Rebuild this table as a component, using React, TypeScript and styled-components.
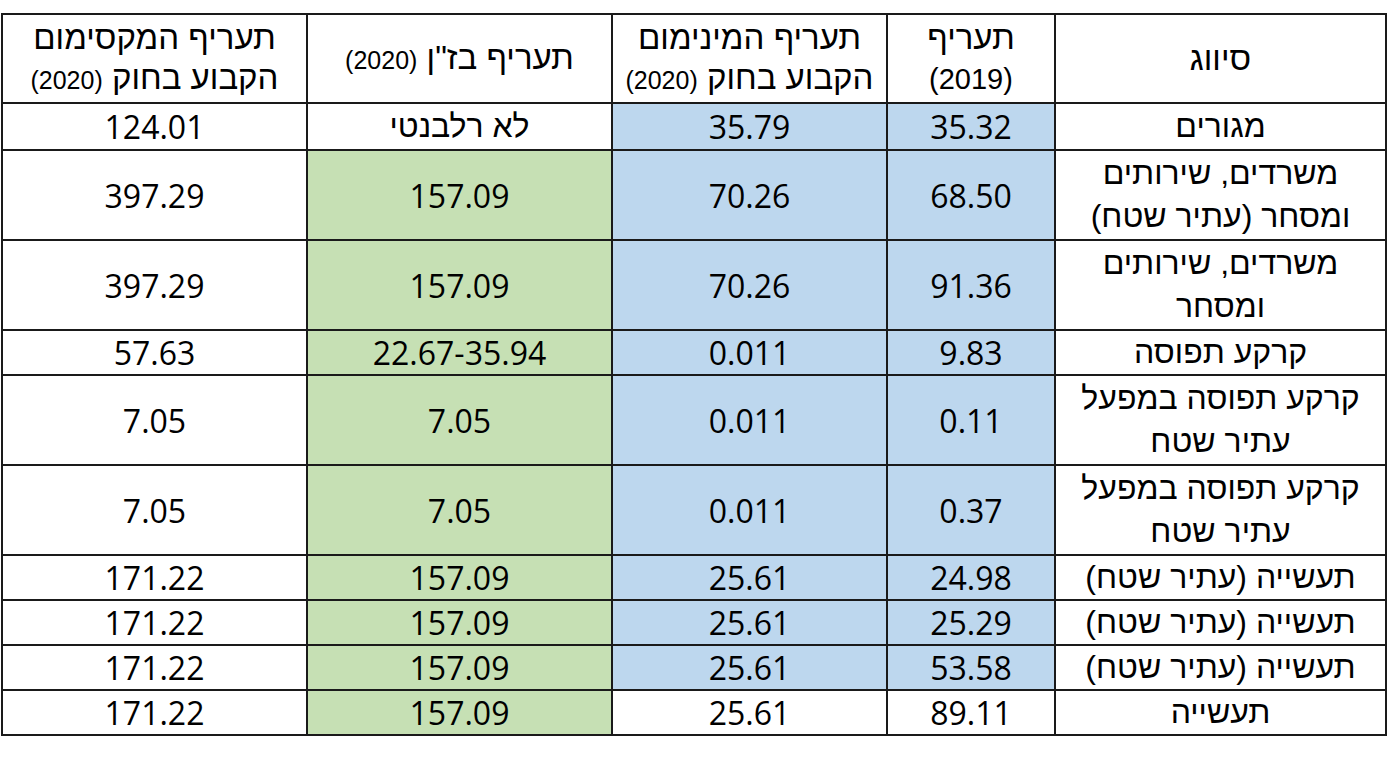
import * as React from 'react';
import styled, { createGlobalStyle } from 'styled-components';

const GlobalStyle = createGlobalStyle`
  html, body {
    margin: 0;
    padding: 0;
    background: #ffffff;
  }
  body {
    font-family: "Liberation Sans", Arial, sans-serif;
    color: #000;
  }
`;

const Page = styled.div`
  width: 1389px;
  height: 757px;
  padding: 13px 0 0 1px;
  box-sizing: border-box;
`;

const Table = styled.table`
  width: 1386px;
  table-layout: fixed;
  border-collapse: collapse;
  direction: rtl;
`;

const HeadRow = styled.tr`
  height: 89px;
`;

const BodyRow = styled.tr<{ h: number }>`
  height: ${({ h }) => h}px;
`;

const HeadCell = styled.th`
  padding: 0 2px;
  border: 2px solid #1a1a1a;
  font-weight: normal;
  font-size: 33px;
  line-height: 40px;
  text-align: center;
  vertical-align: middle;
  white-space: nowrap;
  overflow: hidden;
`;

const Year = styled.span<{ big?: boolean }>`
  font-size: ${({ big }) => (big ? '29px' : '25px')};
`;

type Tint = 'none' | 'blue' | 'green';

const tints: Record<Tint, string> = {
  none: '#ffffff',
  blue: '#bdd7ee',
  green: '#c6e0b4',
};

const Cell = styled.td<{ tint: Tint; num?: boolean }>`
  padding: 0;
  border: 2px solid #1a1a1a;
  background: ${({ tint }) => tints[tint]};
  font-family: ${({ num }) =>
    num ? '"Open Sans", "Liberation Sans", sans-serif' : '"Liberation Sans", Arial, sans-serif'};
  font-size: 32px;
  line-height: 43px;
  text-align: center;
  vertical-align: middle;
  white-space: nowrap;
  overflow: hidden;
`;

interface Row {
  label: React.ReactNode;
  y2019: string;
  min: string;
  bazan: string;
  max: string;
  h: number;
  blue: boolean;
  green: boolean;
}

const rows: Row[] = [
  { label: 'מגורים', y2019: '35.32', min: '35.79', bazan: 'לא רלבנטי', max: '124.01', h: 47, blue: true, green: false },
  { label: <>משרדים, שירותים<br />ומסחר (עתיר שטח)</>, y2019: '68.50', min: '70.26', bazan: '157.09', max: '397.29', h: 90, blue: true, green: true },
  { label: <>משרדים, שירותים<br />ומסחר</>, y2019: '91.36', min: '70.26', bazan: '157.09', max: '397.29', h: 90, blue: true, green: true },
  { label: 'קרקע תפוסה', y2019: '9.83', min: '0.011', bazan: '22.67-35.94', max: '57.63', h: 45, blue: true, green: true },
  { label: <>קרקע תפוסה במפעל<br />עתיר שטח</>, y2019: '0.11', min: '0.011', bazan: '7.05', max: '7.05', h: 90, blue: true, green: true },
  { label: <>קרקע תפוסה במפעל<br />עתיר שטח</>, y2019: '0.37', min: '0.011', bazan: '7.05', max: '7.05', h: 90, blue: true, green: true },
  { label: 'תעשייה (עתיר שטח)', y2019: '24.98', min: '25.61', bazan: '157.09', max: '171.22', h: 45, blue: true, green: true },
  { label: 'תעשייה (עתיר שטח)', y2019: '25.29', min: '25.61', bazan: '157.09', max: '171.22', h: 45, blue: true, green: true },
  { label: 'תעשייה (עתיר שטח)', y2019: '53.58', min: '25.61', bazan: '157.09', max: '171.22', h: 45, blue: true, green: true },
  { label: 'תעשייה', y2019: '89.11', min: '25.61', bazan: '157.09', max: '171.22', h: 45, blue: false, green: true },
];

export default function App() {
  return (
    <Page>
      <GlobalStyle />
      <Table>
        <colgroup>
          <col style={{ width: 331 }} />
          <col style={{ width: 168 }} />
          <col style={{ width: 275 }} />
          <col style={{ width: 305 }} />
          <col style={{ width: 305 }} />
        </colgroup>
        <thead>
          <HeadRow>
            <HeadCell>סיווג</HeadCell>
            <HeadCell>
              תעריף
              <br />
              <Year big>(2019)</Year>
            </HeadCell>
            <HeadCell>
              תעריף המינימום
              <br />
              הקבוע בחוק <Year>(2020)</Year>
            </HeadCell>
            <HeadCell>
              תעריף בז"ן <Year>(2020)</Year>
            </HeadCell>
            <HeadCell>
              תעריף המקסימום
              <br />
              הקבוע בחוק <Year>(2020)</Year>
            </HeadCell>
          </HeadRow>
        </thead>
        <tbody>
          {rows.map((r, i) => (
            <BodyRow key={i} h={r.h}>
              <Cell tint="none">{r.label}</Cell>
              <Cell tint={r.blue ? 'blue' : 'none'} num>{r.y2019}</Cell>
              <Cell tint={r.blue ? 'blue' : 'none'} num>{r.min}</Cell>
              <Cell tint={r.green ? 'green' : 'none'} num={r.green}>
                {r.bazan}
              </Cell>
              <Cell tint="none" num>{r.max}</Cell>
            </BodyRow>
          ))}
        </tbody>
      </Table>
    </Page>
  );
}
